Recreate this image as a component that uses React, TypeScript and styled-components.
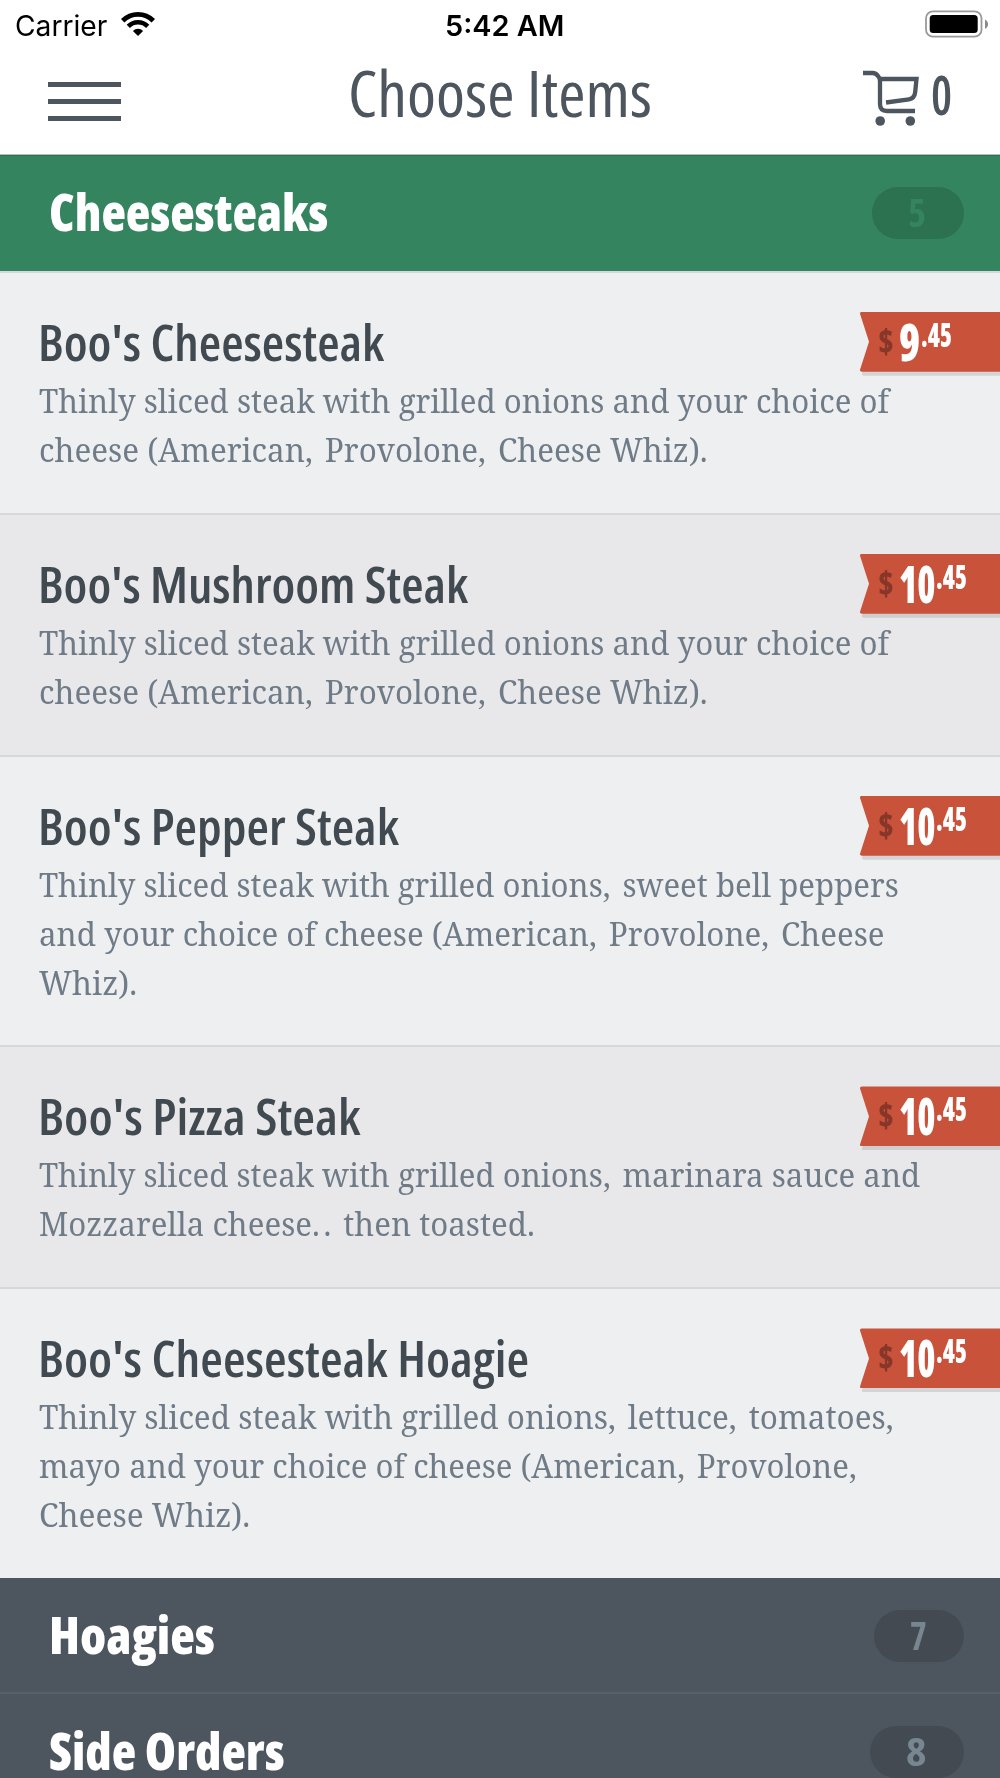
import React, { useLayoutEffect, useRef, useState } from 'react';
import styled, { createGlobalStyle } from 'styled-components';

const sans = '"Open Sans", "Noto Sans", sans-serif';
const serif = '"Noto Serif", "DejaVu Serif Condensed", "DejaVu Serif", serif';
const system = 'Inter, "Liberation Sans", sans-serif';

const GlobalStyle = createGlobalStyle`
  *, *::before, *::after { box-sizing: border-box; }
  body { margin: 0; background: #fff; overflow: hidden; }
  h1, h2, h3, p { margin: 0; font-size: inherit; font-weight: inherit; }
`;

/* Text set to a fixed measure: the glyphs are squeezed or widened to fill it. */
const Measure = styled.span<{ $width: number }>`
  display: block;
  flex: none;
  width: ${p => p.$width}px;
  white-space: nowrap;
`;

const Glyphs = styled.span`
  display: inline-block;
  transform-origin: 0 50%;
  vertical-align: top;
`;

function Fitted({ width, children }: { width: number; children: React.ReactNode }) {
  const ref = useRef<HTMLSpanElement>(null);
  const [scale, setScale] = useState(1);
  useLayoutEffect(() => {
    if (ref.current) setScale(width / ref.current.offsetWidth);
  }, [width, children]);
  return (
    <Measure $width={width}>
      <Glyphs ref={ref} style={{ transform: `scaleX(${scale})` }}>{children}</Glyphs>
    </Measure>
  );
}

const Screen = styled.div`
  width: 1000px;
  height: 1778px;
  overflow: hidden;
  display: flex;
  flex-direction: column;
  background: #fff;
  font-family: ${sans};
  font-stretch: 75%;
`;

const StatusBar = styled.div`
  flex: none;
  height: 52px;
  padding: 0 12px 0 15px;
  display: grid;
  grid-template-columns: 1fr auto 1fr;
  align-items: start;
  font-family: ${system};
  font-stretch: normal;
  font-size: 28.5px;
  line-height: 51px;
  color: #000;
`;

const Signal = styled.div`
  display: flex;
  gap: 13px;
  svg { margin-top: 11px; }
`;

const Clock = styled.div`
  font-weight: 600;
  padding-left: 6px;
`;

const Power = styled.div`
  display: flex;
  justify-content: flex-end;
  svg { margin-top: 10px; }
`;

const NavBar = styled.header`
  flex: none;
  height: 103px;
  padding: 0 48px;
  display: grid;
  grid-template-columns: 1fr auto 1fr;
  align-items: start;
  color: #4d565f;
  border-bottom: 1px solid #b9bfbd;
`;

const MenuButton = styled.button`
  border: 0;
  padding: 0;
  background: none;
  width: 73px;
  height: 39px;
  margin-top: 30px;
  display: flex;
  flex-direction: column;
  justify-content: space-between;
`;

const Bar = styled.span`
  height: 5px;
  background: #4d565f;
`;

const Title = styled.h1`
  font-size: 64px;
  line-height: 82px;
`;

const Cart = styled.div`
  display: flex;
  justify-content: flex-end;
  gap: 11px;
  font-size: 54px;
  font-weight: 600;
  line-height: 84px;
  svg { margin-top: 18px; }
`;

const CategoryBar = styled.div<{ $open?: boolean }>`
  flex: none;
  height: 115.7px;
  padding: 0 36px 0 49px;
  display: flex;
  align-items: center;
  justify-content: space-between;
  background: ${p => (p.$open ? '#34845f' : '#4d555f')};
  box-shadow: ${p => (p.$open ? 'inset 0 1px #2b6f50' : 'inset 0 -2px #575f69')};
`;

const CategoryName = styled.h2`
  margin-bottom: 3px;
  font-size: 51.5px;
  line-height: 70px;
  font-weight: 800;
  color: #fff;
`;

const Count = styled.div<{ $open?: boolean }>`
  height: 52px;
  padding: 0 37.5px 0 36px;
  border-radius: 26px;
  font-size: 39.5px;
  line-height: 50px;
  font-weight: 700;
  background: ${p => (p.$open ? '#2c7150' : '#434a52')};
  color: ${p => (p.$open ? '#34845f' : '#788691')};
`;

const Item = styled.article<{ $shaded: boolean; $lines: number }>`
  flex: none;
  height: ${p => 144.6 + p.$lines * 48.7}px;
  padding-top: 39px;
  border-top: 2px solid #d6d8da;
  background: ${p => (p.$shaded ? '#e8e8ea' : '#eeeff1')};
`;

const ItemHead = styled.div`
  height: 60px;
  padding-left: 38px;
  display: flex;
  align-items: center;
  justify-content: space-between;
`;

const ItemName = styled.h3`
  margin-bottom: 2px;
  font-size: 51px;
  line-height: 60px;
  font-weight: 600;
  color: #414a51;
`;

const Description = styled.p`
  padding: 4px 0 0 39px;
  font-family: ${serif};
  font-stretch: normal;
  font-size: 33px;
  line-height: 49px;
  color: #6f7b87;
`;

const Mark = styled.span`
  margin-right: 4px;
`;

const TagShadow = styled.div`
  filter: drop-shadow(2px 4px 0.6px rgba(0, 0, 0, 0.11));
`;

const Tag = styled.div`
  width: 140px;
  height: 60px;
  padding-left: 18px;
  display: flex;
  background: #c9523a;
  color: #fff;
  font-weight: 800;
  clip-path: polygon(1.5px 0, 100% 0, 100% 100%, 1.5px 100%, 0 59px, 0 58px, 9px 30px, 0 2px, 0 1px);
`;

const Currency = styled.span`
  width: 21px;
  font-size: 33px;
  line-height: 60px;
  color: #86372a;
`;

const Dollars = styled.span`
  font-size: 51.5px;
  line-height: 59px;
`;

const Cents = styled.span`
  font-size: 34px;
  line-height: 45px;
`;

const WifiIcon = () => (
  <svg width="36" height="26" viewBox="0 0 36 26" fill="none" stroke="#000">
    <path d="M2.7 9.7a21.6 21.6 0 0 1 30.6 0" strokeWidth="4.8" />
    <path d="M8.3 15.3a13.7 13.7 0 0 1 19.4 0" strokeWidth="4.6" />
    <path d="M12.9 19.9a7.2 7.2 0 0 1 10.2 0L18 25z" fill="#000" stroke="none" />
  </svg>
);

const BatteryIcon = () => (
  <svg width="63" height="28" viewBox="0 0 63 28">
    <rect x="1" y="1.3" width="55.5" height="25.4" rx="7" fill="none" stroke="#999" strokeWidth="1.8" />
    <rect x="4.7" y="5" width="48" height="18" rx="3.5" fill="#000" />
    <path d="M60 9.5c4 2 4 7.5 0 9.5z" fill="#8a8a8a" />
  </svg>
);

const CartIcon = () => (
  <svg width="57" height="57" viewBox="0 0 57 57" fill="none" stroke="#4d565f" strokeWidth="4.3">
    <path d="M0 3H9.5Q13 3 15 6Q17 8 17 11V34Q17 41 24 41H52" />
    <path d="M16 9H53.5L52.2 22Q51.5 28.5 46 29.3L23 32.5" />
    <circle cx="17.2" cy="51" r="4.8" fill="#4d565f" stroke="none" />
    <circle cx="47.3" cy="51" r="4.8" fill="#4d565f" stroke="none" />
  </svg>
);

/* Commas and full stops inside a line carry extra space after them. */
const punctuate = (text: string) =>
  text.split(/([,.](?=[ .]))/).map((part, i) => (i % 2 ? <Mark key={i}>{part}</Mark> : part));

type Line = [text: string, width: number];
type MenuItem = { name: Line; price: [Line, Line]; lines: Line[] };

const ten: [Line, Line] = [['10', 36.5], ['.45', 31]];

const items: MenuItem[] = [
  {
    name: ["Boo's Cheesesteak", 346],
    price: [['9', 21.5], ['.45', 31]],
    lines: [
      ['Thinly sliced steak with grilled onions and your choice of', 850],
      ['cheese (American, Provolone, Cheese Whiz).', 668.5],
    ],
  },
  {
    name: ["Boo's Mushroom Steak", 430],
    price: ten,
    lines: [
      ['Thinly sliced steak with grilled onions and your choice of', 850],
      ['cheese (American, Provolone, Cheese Whiz).', 668.5],
    ],
  },
  {
    name: ["Boo's Pepper Steak", 361],
    price: ten,
    lines: [
      ['Thinly sliced steak with grilled onions, sweet bell peppers', 860],
      ['and your choice of cheese (American, Provolone, Cheese', 846],
      ['Whiz).', 98.5],
    ],
  },
  {
    name: ["Boo's Pizza Steak", 323],
    price: ten,
    lines: [
      ['Thinly sliced steak with grilled onions, marinara sauce and', 881],
      ['Mozzarella cheese.. then toasted.', 495.5],
    ],
  },
  {
    name: ["Boo's Cheesesteak Hoagie", 491],
    price: ten,
    lines: [
      ['Thinly sliced steak with grilled onions, lettuce, tomatoes,', 854.5],
      ['mayo and your choice of cheese (American, Provolone,', 817.5],
      ['Cheese Whiz).', 211],
    ],
  },
];

function Category({ name, count, open }: { name: Line; count: Line; open?: boolean }) {
  return (
    <CategoryBar $open={open}>
      <CategoryName><Fitted width={name[1]}>{name[0]}</Fitted></CategoryName>
      <Count $open={open}><Fitted width={count[1]}>{count[0]}</Fitted></Count>
    </CategoryBar>
  );
}

function MenuRow({ item, shaded }: { item: MenuItem; shaded: boolean }) {
  const [dollars, cents] = item.price;
  return (
    <Item $shaded={shaded} $lines={item.lines.length}>
      <ItemHead>
        <ItemName><Fitted width={item.name[1]}>{item.name[0]}</Fitted></ItemName>
        <TagShadow>
          <Tag>
            <Currency><Fitted width={15.5}>$</Fitted></Currency>
            <Dollars><Fitted width={dollars[1]}>{dollars[0]}</Fitted></Dollars>
            <Cents><Fitted width={cents[1]}>{cents[0]}</Fitted></Cents>
          </Tag>
        </TagShadow>
      </ItemHead>
      <Description>
        {item.lines.map(([text, width]) => (
          <Fitted key={text} width={width}>{punctuate(text)}</Fitted>
        ))}
      </Description>
    </Item>
  );
}

export default function App() {
  return (
    <>
      <GlobalStyle />
      <Screen>
        <StatusBar>
          <Signal><Fitted width={92}>Carrier</Fitted><WifiIcon /></Signal>
          <Clock><Fitted width={119.5}>5:42 AM</Fitted></Clock>
          <Power><BatteryIcon /></Power>
        </StatusBar>
        <NavBar>
          <MenuButton aria-label="Menu"><Bar /><Bar /><Bar /></MenuButton>
          <Title><Fitted width={304}>Choose Items</Fitted></Title>
          <Cart><CartIcon /><Fitted width={21}>0</Fitted></Cart>
        </NavBar>
        <Category name={['Cheesesteaks', 279]} count={['5', 18.5]} open />
        {items.map((item, i) => (
          <MenuRow key={item.name[0]} item={item} shaded={i % 2 === 1} />
        ))}
        <Category name={['Hoagies', 166]} count={['7', 17]} />
        <Category name={['Side Orders', 236]} count={['8', 21]} />
      </Screen>
    </>
  );
}
